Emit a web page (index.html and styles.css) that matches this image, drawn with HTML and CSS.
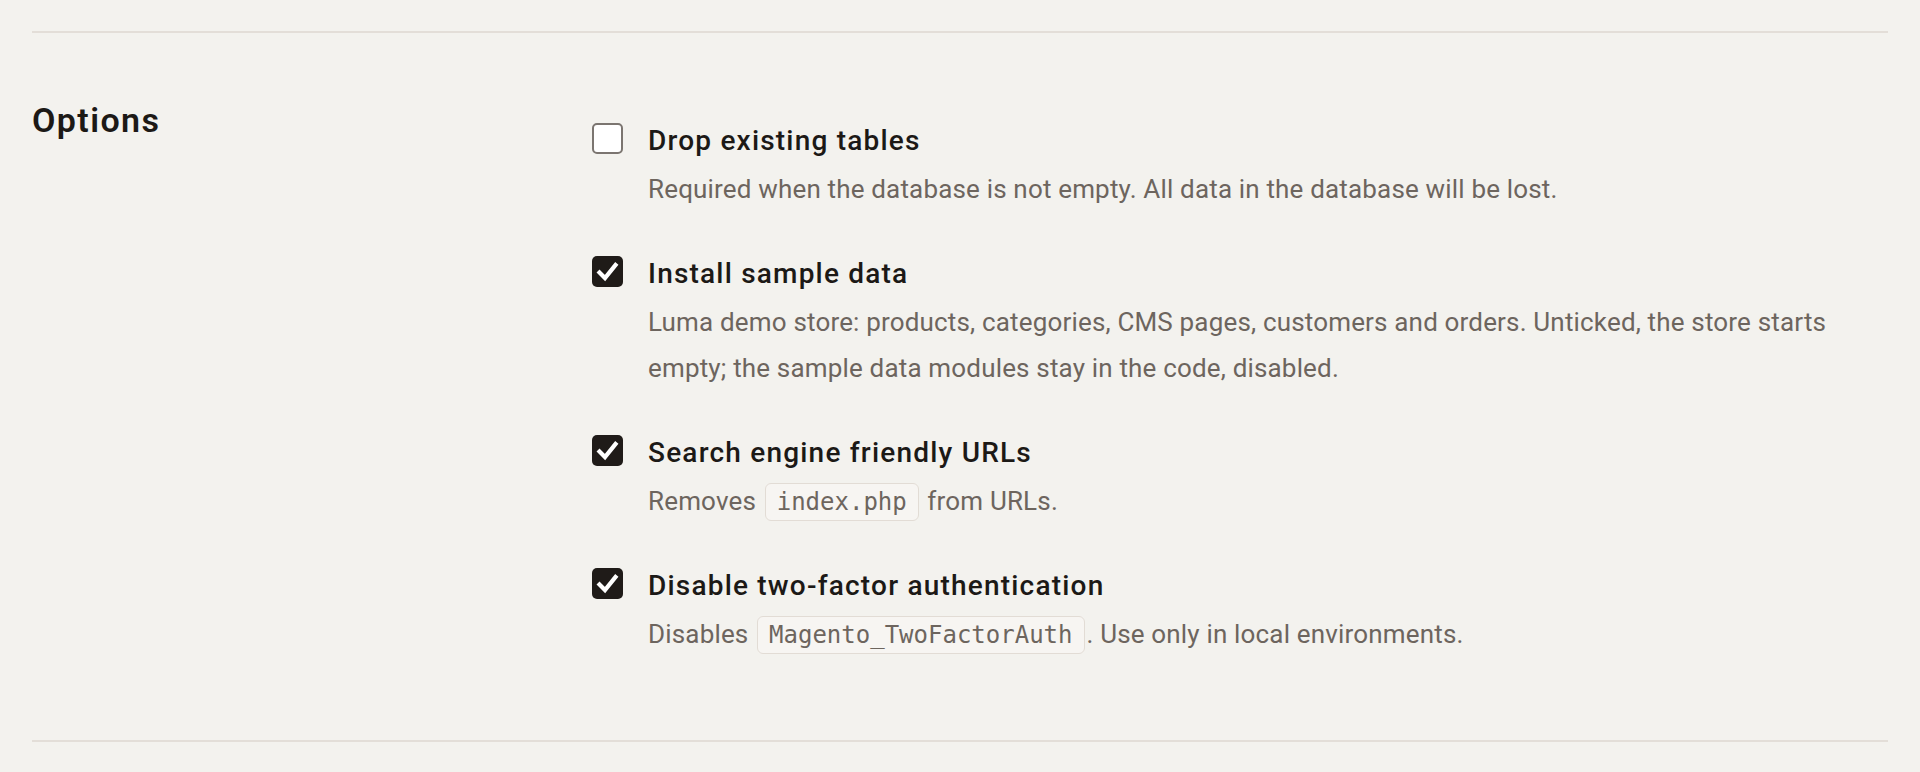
FILE: index.html
```html
<!DOCTYPE html>
<html lang="en">
<head>
<meta charset="utf-8">
<title>Options</title>
<link rel="stylesheet" href="styles.css">
</head>
<body>
<div class="page">
  <hr class="rule">
  <section class="section">
    <h2 class="section-title">Options</h2>
    <div class="options">
      <label class="option">
        <span class="box"></span>
        <span class="option-text">
          <span class="option-title">Drop existing tables</span>
          <span class="option-desc">Required when the database is not empty. All data in the database will be lost.</span>
        </span>
      </label>
      <label class="option">
        <span class="box checked"><svg viewBox="0 0 31 31" width="31" height="31"><path d="M7.5 16.5 L13 22 L23.5 9" fill="none" stroke="#fff" stroke-width="4.2" stroke-linecap="square" stroke-linejoin="miter"/></svg></span>
        <span class="option-text">
          <span class="option-title">Install sample data</span>
          <span class="option-desc">Luma demo store: products, categories, CMS pages, customers and orders. Unticked, the store starts empty; the sample data modules stay in the code, disabled.</span>
        </span>
      </label>
      <label class="option">
        <span class="box checked"><svg viewBox="0 0 31 31" width="31" height="31"><path d="M7.5 16.5 L13 22 L23.5 9" fill="none" stroke="#fff" stroke-width="4.2" stroke-linecap="square" stroke-linejoin="miter"/></svg></span>
        <span class="option-text">
          <span class="option-title">Search engine friendly URLs</span>
          <span class="option-desc">Removes <code class="code">index.php</code> from URLs.</span>
        </span>
      </label>
      <label class="option">
        <span class="box checked"><svg viewBox="0 0 31 31" width="31" height="31"><path d="M7.5 16.5 L13 22 L23.5 9" fill="none" stroke="#fff" stroke-width="4.2" stroke-linecap="square" stroke-linejoin="miter"/></svg></span>
        <span class="option-text">
          <span class="option-title">Disable two-factor authentication</span>
          <span class="option-desc">Disables <code class="code">Magento_TwoFactorAuth</code>. Use only in local environments.</span>
        </span>
      </label>
    </div>
  </section>
  <hr class="rule">
</div>
</body>
</html>
```

FILE: styles.css
```css
html, body {
  margin: 0;
  padding: 0;
  background: #f3f2ee;
}
body {
  font-family: Roboto, "Liberation Sans", sans-serif;
  color: #1c1916;
}
.page {
  padding: 31px 32px 0;
}
.rule {
  margin: 0;
  border: 0;
  height: 2px;
  background: #e3ded8;
}
.section {
  display: grid;
  grid-template-columns: 560px 1fr;
  padding: 67px 0 83px;
}
.section-title {
  margin: 0;
  font-size: 34px;
  line-height: 40px;
  font-weight: 600;
  color: #1c1916;
  letter-spacing: 1.4px;
}
.options {
  display: flex;
  flex-direction: column;
  gap: 40px;
  padding-top: 19px;
}
.option {
  display: flex;
  gap: 25px;
  align-items: flex-start;
}
.box {
  flex: 0 0 31px;
  width: 31px;
  height: 31px;
  box-sizing: border-box;
  border: 2px solid #7b7570;
  border-radius: 5px;
  background: #fff;
  margin-top: 4px;
  display: flex;
}
.box.checked {
  border: 0;
  background: #1f1b18;
}
.option-text {
  display: flex;
  flex-direction: column;
}
.option-title {
  font-size: 28px;
  line-height: 44px;
  font-weight: 500;
  letter-spacing: 1.2px;
  color: #1c1916;
}
.option-desc {
  margin-top: 3px;
  font-size: 26px;
  line-height: 46px;
  letter-spacing: 0.17px;
  color: #6d655e;
}
.code {
  font-family: "DejaVu Sans Mono", "Liberation Mono", monospace;
  font-size: 24px;
  line-height: 1;
  letter-spacing: 0;
  padding: 4px 11px 4px;
  margin: 0 2px;
  border: 1px solid #e2dcd5;
  border-radius: 6px;
  background: #f7f5f2;
  color: #6d655e;
}
```
